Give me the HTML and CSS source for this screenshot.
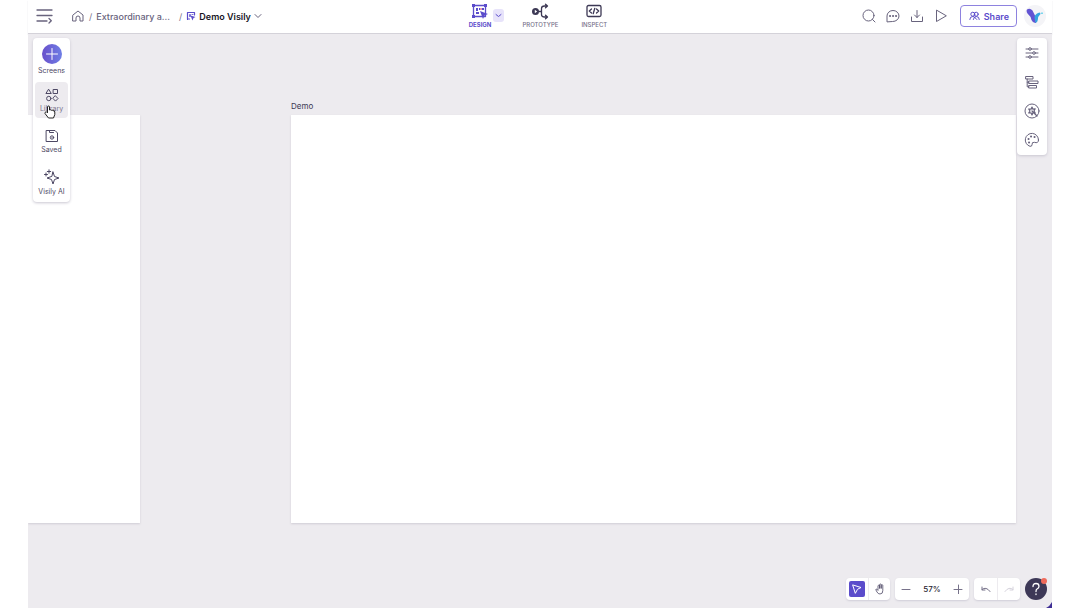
FILE: index.html
```html
<!DOCTYPE html>
<html lang="en">
<head>
<meta charset="utf-8">
<meta name="viewport" content="width=device-width, initial-scale=1">
<title>Demo Visily</title>
<link rel="stylesheet" href="styles.css">
</head>
<body>
<div class="app">
  <header class="topbar">
    <div class="topbar-left">
      <button class="icon-btn menu-btn" aria-label="Menu"><svg width="18" height="16" viewBox="0 0 18 16"><path d="M1 2h15M1 7.500h15M1 13h10M13 10.500l2.300 2.200L13 15"/></svg></button>
      <nav class="crumbs" aria-label="Breadcrumb">
        <a href="#" class="home" aria-label="Home"><svg width="12" height="12" viewBox="0 0 12 12"><path d="M1 5l5-4 5 4v6H8V8a2 2 0 0 0-4 0v3H1z"/></svg></a>
        <span class="slash">/</span>
        <a href="#" class="project">Extraordinary a...</a>
        <span class="slash">/</span>
        <button class="board-btn"><svg class="board-icon" width="10" height="10" viewBox="0 0 10 10"><path d="M8.500 4V1.500h-7v7M1.500 8h2"/><path class="thin" d="M3.500 5.500v-2h1v2M6 3.500h1"/><path class="solid" d="M4.500 4.500l5 1.500-2 1-1 2.500z"/></svg><span>Demo Visily</span><svg class="chevron" width="8" height="8" viewBox="0 0 8 8"><path d="M1 2.500l3 3 3-3"/></svg></button>
      </nav>
    </div>
    <div class="modes">
      <button class="mode active"><svg width="18" height="17" viewBox="0 0 18 17"><path d="M2.500 2.500h12v11h-12z"/><path class="solid" d="M1 1h3v3H1zM13 1h3v3h-3zM1 12h3v3H1z"/><path class="solid" d="M5 5h2v3H5zM8 5h1v2H8zM11 5h2v2h-2zM5 9h3v2H5z"/><path class="pink" d="M9 5h2v2H9z"/><path class="solid" d="M9 8l8 3-3.500 1.500L12 16z"/></svg><span>DESIGN</span></button>
      <button class="mode-more" aria-label="Design options"><svg width="7" height="7" viewBox="0 0 7 7"><path d="M1 2.500l2.500 2L6 2.500"/></svg></button>
      <button class="mode mode-proto"><svg width="18" height="17" viewBox="0 0 18 17"><circle class="solid" cx="4.500" cy="8.500" r="3.500"/><path class="white" d="M3.800 6.800L6.200 8.500 3.800 10.200z"/><path d="M8 8.500h2.500M16 3h-2.500Q10.500 3 10.500 5.500v6Q10.500 14 13.500 14H16M14.500 1.200L16.500 3l-2 1.800M14.500 12.200l2 1.800-2 1.800"/></svg><span>PROTOTYPE</span></button>
      <button class="mode mode-inspect"><svg width="18" height="17" viewBox="0 0 18 17"><rect x="2" y="2.500" width="14" height="11" rx="1.500"/><path d="M6.500 6l-2.200 2 2.200 2M11.500 6l2.200 2-2.200 2M9.800 5.300l-1.600 5.400"/></svg><span>INSPECT</span></button>
    </div>
    <div class="actions">
      <button class="icon-btn" aria-label="Search"><svg width="14" height="14" viewBox="0 0 14 14"><circle cx="6.500" cy="6.500" r="5.500"/><path d="M10.500 10.500L13 13"/></svg></button>
      <button class="icon-btn" aria-label="Comments"><svg width="14" height="14" viewBox="0 0 14 14"><path d="M1 12.500V7a6 5.500 0 1 1 6 5.500z"/><path class="dots" d="M4 7h.1M7 7h.1M10 7h.1"/></svg></button>
      <button class="icon-btn" aria-label="Download"><svg width="14" height="14" viewBox="0 0 14 14"><path d="M7 1.500v7M4.500 6L7 8.500 9.500 6M1.500 8v4.500h11V8"/></svg></button>
      <button class="icon-btn" aria-label="Play"><svg width="14" height="14" viewBox="0 0 14 14"><path d="M2.500 1.500v11L12 7z"/></svg></button>
      <button class="share"><svg width="11" height="10" viewBox="0 0 11 10"><circle cx="3.800" cy="3.200" r="2"/><circle cx="7.200" cy="3.200" r="2"/><path d="M.8 8.500q0-3 3-3 1.700 0 2.500 1.500l1.500 1.500M10.300 8.500q0-3-3-3Q5 5.500 4.300 8.500"/></svg><span>Share</span></button>
      <button class="avatar" aria-label="Account"><svg width="18" height="16" viewBox="0 0 18 16"><path class="v-left" d="M1 1.500Q4-.5 6.500 2.500L9.500 8.500 10 15Q7 15.500 5.500 12 5 8.500 1.500 5.500 0 3.500 1 1.500z"/><path class="v-right" d="M8.500 9Q9.500 5 14 4.500L14.500 6Q12 8 11.800 12 11.500 14.500 9.500 15z"/><path class="v-dot" d="M15 4.500h2v1.500h-2z"/></svg></button>
    </div>
  </header>
  <main class="canvas">
    <section class="artboard board-prev"></section>
    <section class="artboard board-demo"><h2>Demo</h2></section>

    <aside class="panel tools">
      <button class="tool"><span class="plus"><svg width="14" height="14" viewBox="0 0 14 14"><path d="M7 1.500v11M1.500 7h11"/></svg></span><span>Screens</span></button>
      <button class="tool hovered"><svg width="14" height="14" viewBox="0 0 14 14"><path d="M3.800 1.500l2.500 4H1.300zM8.500 1.500h4v4h-4z"/><circle cx="3.800" cy="10.500" r="2.200"/><path d="M10.500 7.900l2.500 2.600-2.500 2.600-2.500-2.600z"/></svg><span>Library</span>
        <svg class="cursor" width="12" height="14" viewBox="0 0 12 14"><path d="M3.500 7.500V2q0-1 1-1t1 1v3q1-.6 1.800.3 1-.5 1.700.4 1.800-.2 1.800 1.300v2.500L9.500 13h-5L1 8.500Q.7 7 2 6.800z"/></svg></button>
      <button class="tool"><svg width="14" height="14" viewBox="0 0 14 14"><path d="M1.500 1.500h8.500l2.500 2.500v8.500h-11zM4.500 1.500v2h4"/><circle cx="7" cy="8.500" r="1.700"/><path d="M7 8.500v.1"/></svg><span>Saved</span></button>
      <button class="tool"><svg width="16" height="16" viewBox="0 0 16 16"><path d="M9 3l1.500 4.500L15 9l-4.500 1.500L9 15l-1.500-4.500L3 9l4.500-1.500zM5 .8v3.400M3.300 2.500h3.400M2 4v3M.5 5.500h3"/></svg><span>Visily AI</span></button>
    </aside>

    <aside class="panel props">
      <button class="icon-btn" aria-label="Properties"><svg width="14" height="14" viewBox="0 0 14 14"><path d="M1 3h3M6.500 3H13M1 7h6.500M10.500 7H13M1 11h3M6.500 11H13"/><circle cx="5" cy="3" r="1.300"/><circle cx="9" cy="7" r="1.300"/><circle cx="5" cy="11" r="1.300"/></svg></button>
      <button class="icon-btn" aria-label="Layers"><svg width="14" height="14" viewBox="0 0 14 14"><path d="M1 1.500h7v2.500H1zM4 6h9v2.500H4zM4 10.500h7.500V13H4zM2.200 4v7.800H4M2.200 7.200H4"/></svg></button>
      <button class="icon-btn" aria-label="Accessibility"><svg width="16" height="16" viewBox="0 0 16 16"><circle cx="8" cy="8" r="7"/><path class="star" d="M8 4l.9 2.200 2.300-.4L10 8l1.200 2-2.300-.2L8 12l-1-2.200-2.300.2L6 8 4.700 6l2.400.2zM8 8l5 5"/></svg></button>
      <button class="icon-btn" aria-label="Theme"><svg width="16" height="16" viewBox="0 0 16 16"><path d="M14.500 8A6.600 6.600 0 1 0 6 14.300q2 .3 2-1.500-.2-3 2.300-2.500 4.200 1.500 4.200-2.300z"/><path class="dots" d="M4.500 7h.1M7 4.500h.1M10.500 5h.1M5 10.500h.1"/></svg></button>
    </aside>

    <footer class="bottom">
      <div class="group">
        <button class="pointer on" aria-label="Select"><svg width="10" height="10" viewBox="0 0 10 10"><path d="M1 1l8 2.500-3.500 1.800L3.500 9z"/></svg></button>
        <button class="hand" aria-label="Pan"><svg width="12" height="12" viewBox="0 0 12 12"><path class="thin" d="M4 6.500V3q0-.8.800-.8t.8.800v2.500V1.800q0-.8.800-.8t.8.800v3.700V2.500q0-.8.800-.8t.8.800V7.500Q9 11 6 11 4 11 3 9L1.800 6.800q.2-1.200 1.200-.6L4 7.500"/></svg></button>
      </div>
      <div class="group zoom">
        <button aria-label="Zoom out"><svg width="10" height="10" viewBox="0 0 10 10"><path d="M1 5.500h8"/></svg></button>
        <button class="percent">57%</button>
        <button aria-label="Zoom in"><svg width="10" height="10" viewBox="0 0 10 10"><path d="M1 5.500h8M5.500 1v9"/></svg></button>
      </div>
      <div class="group history">
        <button aria-label="Undo"><svg width="12" height="10" viewBox="0 0 12 10"><path d="M2 3v3h3M2 5.500Q6 2 10 7.500"/></svg></button>
        <button class="off" aria-label="Redo" disabled><svg width="12" height="10" viewBox="0 0 12 10"><path d="M10 3v3H7M10 5.500Q6 2 2 7.500"/></svg></button>
      </div>
      <button class="help" aria-label="Help"><svg width="14" height="16" viewBox="0 0 14 16"><path d="M4 5.500q0-3 3-3t3 2.700Q10 7 8 8 7 8.500 7 10.500M7 13v.5"/></svg><i class="badge"></i></button>
    </footer>
    <svg class="corner" width="6" height="6" viewBox="0 0 6 6"><path class="solid" d="M6 0v6H0Q4 4 6 0z"/></svg>
  </main>
</div>
</body>
</html>
```
FILE: styles.css
```css
* { box-sizing: border-box; }
body {
  margin: 0;
  background: #fff;
  color: #3c3854;
  font-family: Inter, "Liberation Sans", sans-serif;
  font-size: 9px;
}
button {
  display: flex;
  align-items: center;
  justify-content: center;
  padding: 0;
  border: 0;
  background: none;
  color: inherit;
  font: inherit;
  cursor: pointer;
}
a { color: inherit; text-decoration: none; }
svg {
  display: block;
  flex: none;
  fill: none;
  stroke: currentColor;
  stroke-width: 1;
  stroke-linecap: round;
  stroke-linejoin: round;
}
.solid { fill: currentColor; stroke: none; }
.white { fill: #fff; stroke: none; }
.pink { fill: #e59bb0; stroke: none; }
.dots { stroke-width: 2; }
.thin { stroke-width: 0.8; }

.app {
  display: flex;
  flex-direction: column;
  min-height: 100vh;
  margin: 0 28px;
}

/* Top bar */
.topbar {
  display: grid;
  grid-template-columns: 1fr auto 1fr;
  align-items: start;
  padding: 0 6px 0 8px;
  height: 34px;
  border-bottom: 1px solid #d4d2d9;
  box-shadow: 0 1px 1px #dddbe1;
}
.topbar-left, .crumbs, .actions, .modes, .board-btn { display: flex; align-items: center; }
.topbar-left { gap: 18px; height: 32px; color: #68637d; }
.menu-btn svg { stroke-width: 1.3; }
.crumbs { gap: 4px; white-space: nowrap; }
.home { margin-right: 1px; }
.project { margin-right: 5px; font-weight: 500; }
.slash { color: #77728a; }
.board-btn { gap: 3px; color: #17151f; font-weight: 600; }
.board-icon { color: #5b4ccb; stroke-width: 1.2; }
.chevron { color: #68637d; }

.modes { align-items: flex-start; padding: 3px 6px 0 0; }
.mode {
  flex-direction: column;
  gap: 1px;
  color: #3c3854;
  font-size: 6px;
  line-height: 7px;
  font-weight: 500;
}
.mode svg { stroke-width: 1.3; }
.mode span { color: #77728a; }
.mode.active, .mode.active span { color: #5b4ccb; font-weight: 700; }
.mode-more {
  width: 11px;
  height: 13px;
  margin: 6px 18px 0 2px;
  border-radius: 3px;
  background: #e7e3fa;
  color: #5b4ccb;
}
.mode-inspect { margin-left: 23px; }

.actions { justify-content: flex-end; gap: 10px; height: 32px; }
.icon-btn { color: #68637d; }
.share {
  gap: 4px;
  height: 22px;
  margin: 0 -3px 0 2px;
  padding: 0 7px 0 8px;
  border: 1px solid #8e82df;
  border-radius: 4px;
  color: #5b4ccb;
  font-weight: 600;
}
.avatar { width: 22px; height: 22px; border-radius: 50%; background: #f4f4f7; }
.v-left { fill: #6254d3; stroke: none; }
.v-right { fill: #35a5df; stroke: none; }
.v-dot { fill: #7bd6ed; stroke: none; }

/* Canvas */
.canvas { position: relative; flex: 1; overflow: hidden; background: #edebef; }
.artboard {
  position: absolute;
  top: 81px;
  height: 408px;
  background: #fff;
  box-shadow: 0 1px 2px #cfccd5;
}
.board-prev { left: 0; width: 112px; }
.board-demo { left: 263px; width: 725px; }
.artboard h2 {
  position: absolute;
  bottom: 100%;
  left: 0;
  margin: 0 0 3px;
  font-size: 8px;
  line-height: 12px;
  font-weight: 400;
}

.panel {
  position: absolute;
  top: 4px;
  display: flex;
  flex-direction: column;
  border-radius: 4px;
  background: #fff;
  box-shadow: 0 1px 3px #c9c6d1;
}
.tools { left: 5px; gap: 5px; width: 37px; padding: 3px 2px 2px; }
.tool {
  position: relative;
  flex-direction: column;
  gap: 3px;
  height: 36px;
  border-radius: 4px;
  color: #4d4864;
  font-size: 7px;
  line-height: 8px;
  white-space: nowrap;
}
.hovered { background: #edebef; }
.hovered > span { color: #77728a; }
.plus {
  display: flex;
  align-items: center;
  justify-content: center;
  width: 20px;
  height: 20px;
  border-radius: 50%;
  background: linear-gradient(90deg, #6950cb, #6f7ee5);
  color: #fff;
}
.cursor { position: absolute; left: 9px; top: 23px; fill: #fff; color: #222; }

.props { right: 5px; gap: 13px; width: 30px; padding: 7px 0; }
.props .icon-btn { height: 16px; }
.star { stroke-width: 1.2; }

/* Bottom controls */
.bottom { position: absolute; right: 5px; bottom: 8px; display: flex; align-items: center; gap: 5px; }
.group {
  display: flex;
  align-items: center;
  height: 22px;
  border-radius: 4px;
  background: #fff;
  box-shadow: 0 1px 2px #d0cdd8;
}
.group button { width: 22px; height: 22px; color: #77728a; }
.group .pointer { width: 16px; height: 16px; margin: 0 3px; border-radius: 2px; background: #5b4ccb; color: #fff; }
.group .hand { color: #4d4864; }
.group .hand, .group .off { border-left: 1px solid #edebef; }
.group .percent { width: 30px; color: #25222f; font-size: 8px; font-weight: 500; }
.group .off { color: #d5d2dc; }
.history button { width: 23px; }
.help { position: relative; width: 22px; height: 22px; border-radius: 50%; background: #3d3857; color: #fff; }
.help svg { stroke-width: 1.3; }
.badge { position: absolute; top: 0; right: 0; width: 6px; height: 6px; border-radius: 50%; background: #ef6a5b; }
.corner { position: absolute; right: 0; bottom: 0; color: #3f2f95; }
```
